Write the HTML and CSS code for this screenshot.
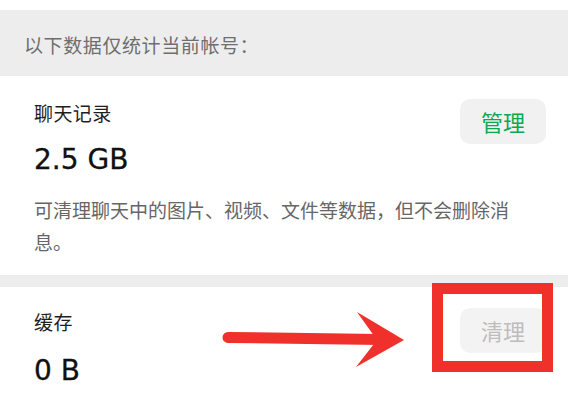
FILE: index.html
```html
<!DOCTYPE html>
<html lang="zh-CN">
<head>
<meta charset="utf-8">
<title>存储空间</title>
<link rel="stylesheet" href="styles.css">
</head>
<body>
<div class="page">
  <div class="spacer"></div>
  <div class="notice">以下数据仅统计当前帐号：</div>
  <section class="card card-chat">
    <div class="card-head">
      <div class="info">
        <div class="title">聊天记录</div>
        <div class="size">2.5 GB</div>
      </div>
      <button class="btn btn-manage">管理</button>
    </div>
    <p class="desc">可清理聊天中的图片、视频、文件等数据，但不会删除消息。</p>
  </section>
  <div class="divider"></div>
  <section class="card card-cache">
    <div class="card-head">
      <div class="info">
        <div class="title">缓存</div>
        <div class="size size-cache">0 B</div>
      </div>
      <button class="btn btn-clean" disabled>清理</button>
    </div>
  </section>
  <svg class="arrow" width="190" height="70" viewBox="222 305 190 70" aria-hidden="true">
    <line x1="228" y1="337.5" x2="380" y2="339.5" stroke="#f0312b" stroke-width="11" stroke-linecap="round"/>
    <polygon points="357,312 404,340 356,367 377,340" fill="#f0312b"/>
  </svg>
  <div class="highlight"></div>
</div>
</body>
</html>
```

FILE: styles.css
```css
* { box-sizing: border-box; }

html, body {
  margin: 0;
  padding: 0;
  background: #ffffff;
}

body {
  font-family: "Noto Sans CJK SC", "Noto Sans", sans-serif;
  overflow: hidden;
}

.page {
  position: relative;
  width: 568px;
  height: 400px;
  overflow: hidden;
}

.spacer {
  height: 10px;
  background: #ffffff;
}

.notice {
  background: #ededed;
  height: 66px;
  padding: 22px 0 0 24px;
  font-size: 19px;
  line-height: 26px;
  letter-spacing: 0.6px;
  color: #6e6e6e;
}

.card {
  background: #ffffff;
  padding: 24px 22px 0 34px;
}

.card-chat {
  height: 199px;
}

.card-cache {
  padding-top: 22px;
}

.card-head {
  display: flex;
  justify-content: space-between;
  align-items: flex-start;
}

.title {
  font-size: 19px;
  line-height: 26px;
  letter-spacing: 0.4px;
  color: #1e1e1e;
}

.size {
  margin-top: 14px;
  font-family: "DejaVu Sans", "Noto Sans", sans-serif;
  font-size: 28px;
  line-height: 40px;
  color: #111111;
  -webkit-text-stroke: 0.3px #111111;
}

.size-cache {
  margin-top: 16px;
}

.btn {
  margin-top: -1px;
  width: 86px;
  height: 45px;
  border: none;
  border-radius: 10px;
  background: #f1f1f1;
  font-family: "Noto Sans CJK SC", sans-serif;
  font-size: 22px;
  line-height: 45px;
  padding: 0;
}

.btn-manage {
  color: #0aa852;
}

.btn-clean {
  color: #bdbdbd;
  background: #f3f3f3;
}

.desc {
  margin: 14px 12px 0 0;
  font-size: 19px;
  line-height: 32px;
  color: #666666;
}

.divider {
  height: 12px;
  background: #ededed;
}

.arrow {
  position: absolute;
  left: 222px;
  top: 305px;
}

.highlight {
  position: absolute;
  left: 432px;
  top: 283px;
  width: 121px;
  height: 89px;
  border: 11px solid #f0312b;
}
```
